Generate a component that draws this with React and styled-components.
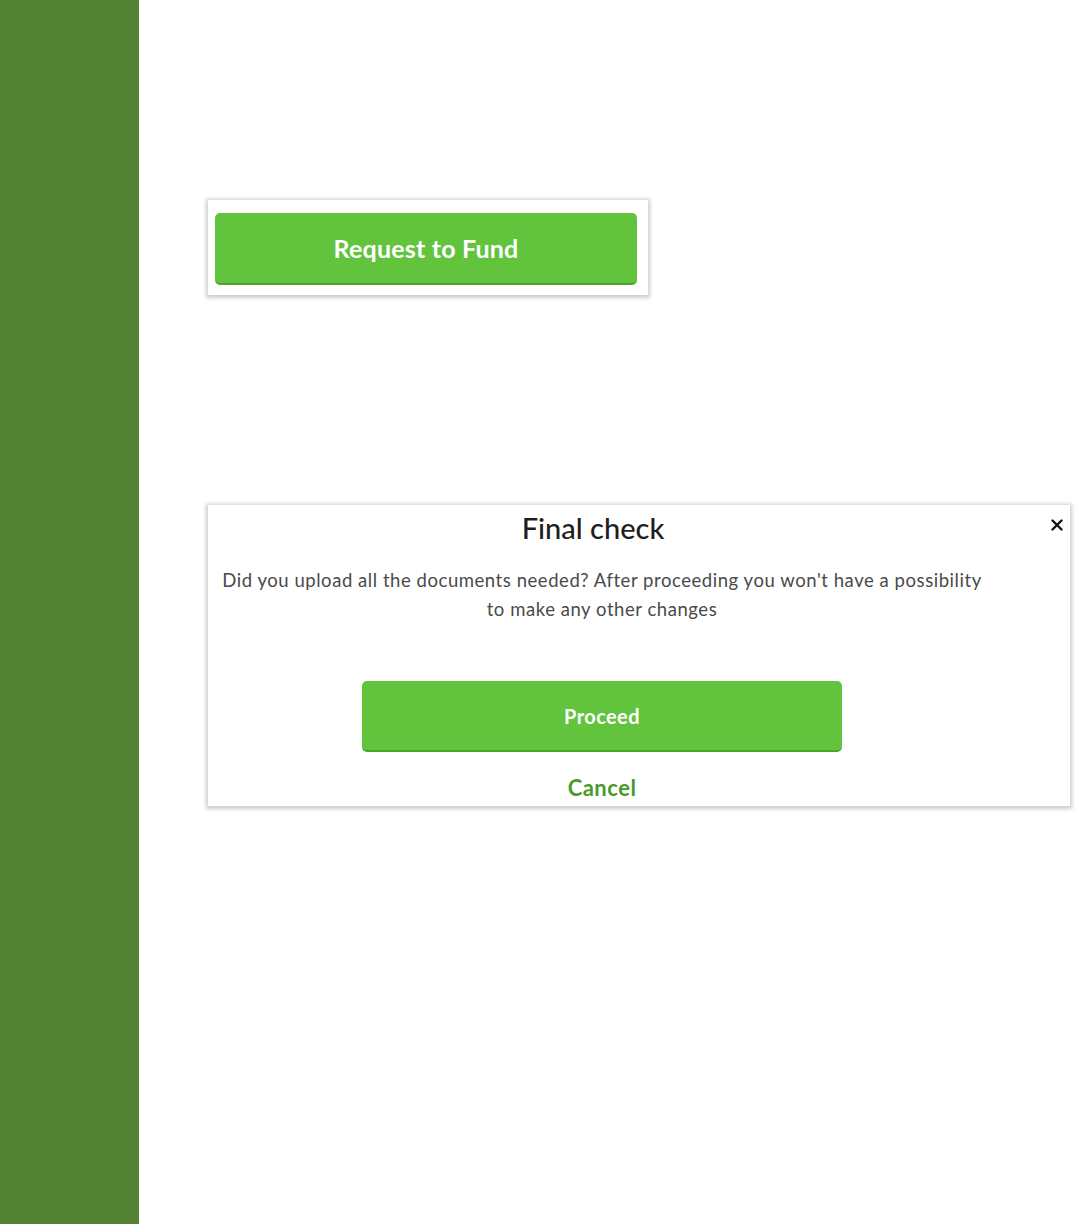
import React from 'react'
import styled, { createGlobalStyle } from 'styled-components'

const GlobalStyle = createGlobalStyle`
  html, body {
    margin: 0;
    padding: 0;
    background: #fff;
    font-family: Lato, "Open Sans", sans-serif;
  }
`

const CloseIcon = () => (
  <svg width="12" height="12" viewBox="0 0 12 12">
    <path d="M1.5 1.5 L10.5 10.5 M10.5 1.5 L1.5 10.5" stroke="#111" strokeWidth="2.4" strokeLinecap="round" />
  </svg>
)

export default function App() {
  return (
    <Page>
      <GlobalStyle />
      <Sidebar />
      <Main>
        <FundCard>
          <GreenButton $size="lg">Request to Fund</GreenButton>
        </FundCard>

        <Dialog>
          <CloseButton aria-label="Close">
            <CloseIcon />
          </CloseButton>
          <Content>
            <Title>Final check</Title>
            <Message>
              Did you upload all the documents needed? After proceeding you won't have a possibility
              to make any other changes
            </Message>
            <Actions>
              <GreenButton $size="md" $width="480px">Proceed</GreenButton>
              <CancelLink>Cancel</CancelLink>
            </Actions>
          </Content>
        </Dialog>
      </Main>
    </Page>
  )
}

const Page = styled.div`
  display: flex;
  min-height: 1224px;
`

const Sidebar = styled.aside`
  width: 139px;
  flex-shrink: 0;
  background: #538234;
`

const Main = styled.main`
  flex: 1;
  display: flex;
  flex-direction: column;
  align-items: flex-start;
  padding: 200px 9px 0 69px;
`

const Panel = styled.div`
  background: #fff;
  box-shadow: 0 1px 4px 2px rgba(0, 0, 0, 0.2);
  box-sizing: border-box;
`

const FundCard = styled(Panel)`
  width: 440px;
  padding: 13px 11px 10px 7px;
`

const GreenButton = styled.button`
  display: flex;
  align-items: center;
  justify-content: center;
  width: ${p => p.$width || '100%'};
  height: ${p => (p.$size === 'lg' ? '72px' : '71px')};
  border: none;
  border-bottom: 2px solid #4aa52a;
  border-radius: 5px;
  background: #62c43c;
  color: #fff;
  font-family: Lato, sans-serif;
  font-weight: 700;
  font-size: ${p => (p.$size === 'lg' ? '25px' : '20px')};
  letter-spacing: ${p => (p.$size === 'lg' ? '0.2px' : '0.4px')};
  cursor: pointer;
`

const Dialog = styled(Panel)`
  position: relative;
  margin-top: 210px;
  width: 862px;
  padding: 3px 86px 3px 12px;
`

const CloseButton = styled.button`
  position: absolute;
  top: 12px;
  right: 3px;
  width: 20px;
  height: 16px;
  display: flex;
  align-items: center;
  justify-content: center;
  padding: 0;
  border: none;
  background: transparent;
  cursor: pointer;
`

const Content = styled.div`
  display: flex;
  flex-direction: column;
  align-items: center;
  text-align: center;
`

const Title = styled.h2`
  margin: 0 18px 0 0;
  font-size: 29px;
  line-height: 40px;
  font-weight: 500;
  color: #1e1e1e;
`

const Message = styled.p`
  margin: 18px 0 0;
  font-size: 18.5px;
  line-height: 29px;
  letter-spacing: 0.55px;
  color: #4a4a4a;
`

const Actions = styled.div`
  display: flex;
  flex-direction: column;
  align-items: center;
  margin-top: 57px;
`

const CancelLink = styled.button`
  margin-top: 21px;
  padding: 0;
  border: none;
  background: transparent;
  font-family: Lato, sans-serif;
  font-weight: 700;
  font-size: 22px;
  line-height: 30px;
  letter-spacing: 0.5px;
  color: #4a9a2a;
  cursor: pointer;
`
